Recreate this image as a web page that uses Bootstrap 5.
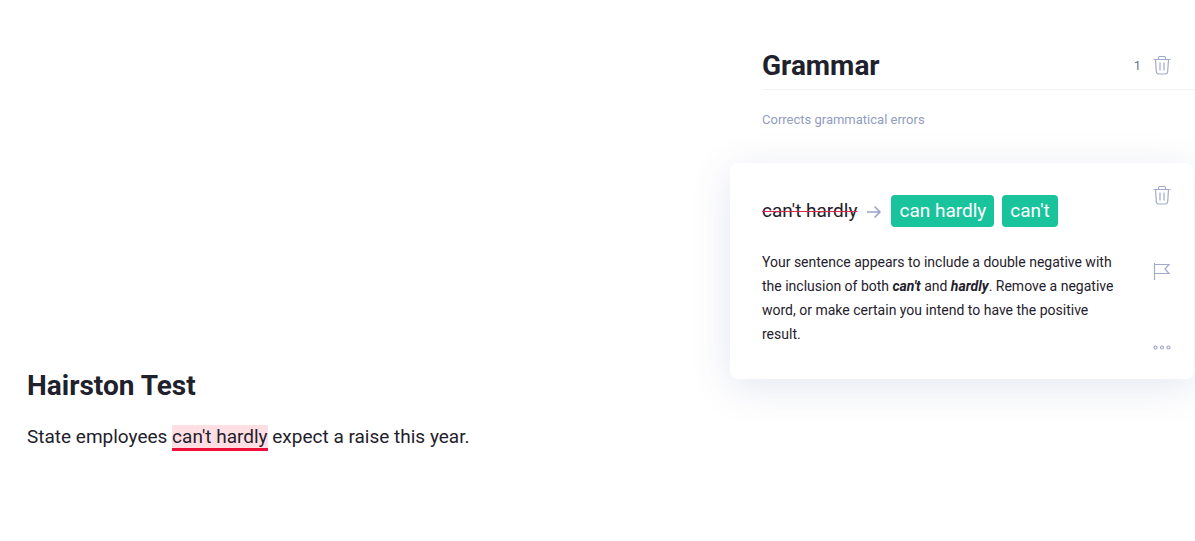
<!DOCTYPE html>
<html lang="en">
<head>
<meta charset="utf-8">
<meta name="viewport" content="width=device-width, initial-scale=1">
<title>Hairston Test</title>
<link href="https://cdn.jsdelivr.net/npm/bootstrap@5.3.0/dist/css/bootstrap.min.css" rel="stylesheet">
<style>
body { font-family: Roboto, sans-serif; color: #1f212c; background: #fff; }
.editor { min-width: 0; padding: 368px 27px 0; }
.title { font-size: 28px; line-height: 36px; font-weight: 700; }
.sentence { font-size: 19px; line-height: 28px; margin-top: 19px; }
.issue { color: inherit; background: #ffdfe3; border-bottom: 3px solid #ee1038; }
.panel { flex: 0 1 464px; margin-right: 1px; }
.panel-head { margin-left: 32px; padding: 48px 23px 5px 0; border-bottom: 1px solid #f0f1f4; }
.count { font-size: 13px; color: #6d758d; margin-right: 12px; }
.hint { margin: 20px 0 33px 32px; font-size: 13px; line-height: 20px; color: #929dc0; }
.suggestion { border-radius: 8px; padding: 32px 23px 32px 32px; background: #fff; box-shadow: 0 8px 40px rgba(70, 85, 150, .14); }
.word { font-size: 19px; line-height: 32px; }
.wrong { text-decoration: line-through #e0284c 1px; }
.fix { color: #fff; background: #19c39c; border: 0; border-radius: 4px; padding: 0 8px; }
.fix:hover { background: #14b08c; }
.explain { font-size: 14px; line-height: 24px; margin: 23px 0 1px; }
.tool { display: block; border: 0; padding: 0; background: none; color: #a1abca; line-height: 0; }
.tool svg, .arrow { fill: none; stroke: currentColor; stroke-width: 1.2; }
.arrow { color: #98a3c9; margin: 0 9px; flex: none; stroke-width: 1.5; }
.tools { margin: -10px 0; }
</style>
</head>
<body>
<div class="d-flex flex-column flex-md-row align-items-start">
  <main class="editor flex-grow-1">
    <h1 class="title mb-0">Hairston Test</h1>
    <p class="sentence mb-0">State employees <span class="issue">can't hardly</span> expect a raise this year.</p>
  </main>
  <aside class="panel">
    <header class="panel-head d-flex align-items-center">
      <h2 class="title mb-0 me-auto">Grammar</h2>
      <span class="count">1</span>
      <button class="tool" type="button" aria-label="Dismiss all">
        <svg width="18" height="20" viewBox="0 0 18 20"><path d="M.5 3.500h17M5.500 3V2q0-1.500 1.500-1.500h4q1.500 0 1.500 1.500V3M2.500 3.500l.8 12q.2 2.500 2.500 2.500h6.400q2.300 0 2.500-2.500l.8-12M7 6.500v8M11 6.500v8"/></svg>
      </button>
    </header>
    <p class="hint">Corrects grammatical errors</p>
    <section class="suggestion d-flex">
      <div class="flex-grow-1">
        <div class="word d-flex align-items-center">
          <del class="wrong">can't hardly</del>
          <svg class="arrow" width="16" height="16" viewBox="0 0 16 16"><path d="M1 9h13M8.500 3.500L14 9l-5.500 5.500"/></svg>
          <button class="fix" type="button">can hardly</button>
          <button class="fix ms-2" type="button">can't</button>
        </div>
        <p class="explain">Your sentence appears to include a double negative with<br>the inclusion of both <em class="fw-bold">can't</em> and <em class="fw-bold">hardly</em>. Remove a negative<br>word, or make certain you intend to have the positive<br>result.</p>
      </div>
      <div class="tools d-flex flex-column justify-content-between">
        <button class="tool" type="button" aria-label="Dismiss">
          <svg width="18" height="20" viewBox="0 0 18 20"><path d="M.5 4.500h17M5.500 4V3q0-1.500 1.500-1.500h4q1.500 0 1.500 1.500V4M2.500 4.500l.8 12q.2 2.500 2.500 2.500h6.400q2.300 0 2.500-2.500l.8-12M7 7.500v8M11 7.500v8"/></svg>
        </button>
        <button class="tool" type="button" aria-label="Report">
          <svg width="18" height="18" viewBox="0 0 18 18"><path d="M1.500 1v17M1.500 2.500h14.500l-4 4.500 4 4.500h-14.500"/></svg>
        </button>
        <button class="tool" type="button" aria-label="More">
          <svg width="18" height="20" viewBox="0 0 18 20"><circle cx="2.500" cy="10.500" r="1.500"/><circle cx="9" cy="10.500" r="1.500"/><circle cx="15.500" cy="10.500" r="1.500"/></svg>
        </button>
      </div>
    </section>
  </aside>
</div>
<script src="https://cdn.jsdelivr.net/npm/bootstrap@5.3.0/dist/js/bootstrap.bundle.min.js"></script>
</body>
</html>
